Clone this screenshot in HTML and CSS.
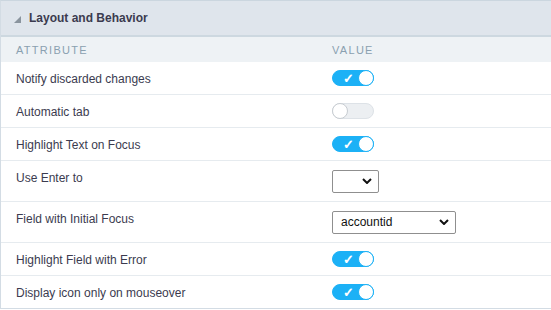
FILE: index.html
```html
<!DOCTYPE html>
<html lang="en">
<head>
  <meta charset="UTF-8">
  <meta name="viewport" content="width=device-width, initial-scale=1.0">
  <title>Layout and Behavior</title>
  <link rel="stylesheet" href="styles.css">
</head>
<body>
  <div class="panel">
    <div class="panel-title">
      <span class="caret"></span>
      <span>Layout and Behavior</span>
    </div>
    <div class="row head">
      <div class="attr">Attribute</div>
      <div class="val">Value</div>
    </div>

    <div class="row">
      <div class="attr">Notify discarded changes</div>
      <div class="val"><span class="toggle on"><span class="check">&#10003;</span><span class="knob"></span></span></div>
    </div>
    <div class="row">
      <div class="attr">Automatic tab</div>
      <div class="val"><span class="toggle"><span class="knob"></span></span></div>
    </div>
    <div class="row">
      <div class="attr">Highlight Text on Focus</div>
      <div class="val"><span class="toggle on"><span class="check">&#10003;</span><span class="knob"></span></span></div>
    </div>
    <div class="row tall">
      <div class="attr">Use Enter to</div>
      <div class="val">
        <div class="select small"><span class="sel-text"></span><svg class="chev" viewBox="0 0 10 6" width="10" height="6"><path d="M1 1l4 4 4-4" fill="none" stroke="#111" stroke-width="2"/></svg></div>
      </div>
    </div>
    <div class="row tall">
      <div class="attr">Field with Initial Focus</div>
      <div class="val">
        <div class="select wide"><span class="sel-text">accountid</span><svg class="chev" viewBox="0 0 10 6" width="10" height="6"><path d="M1 1l4 4 4-4" fill="none" stroke="#111" stroke-width="2"/></svg></div>
      </div>
    </div>
    <div class="row">
      <div class="attr">Highlight Field with Error</div>
      <div class="val"><span class="toggle on"><span class="check">&#10003;</span><span class="knob"></span></span></div>
    </div>
    <div class="row">
      <div class="attr">Display icon only on mouseover</div>
      <div class="val"><span class="toggle on"><span class="check">&#10003;</span><span class="knob"></span></span></div>
    </div>
  </div>
</body>
</html>
```

FILE: styles.css
```css
body {
  margin: 0;
  font-family: Arial, "Liberation Sans", sans-serif;
  background: #fff;
  color: #3b3b4f;
}

.panel {
  width: 551px;
  border-left: 1px solid #d3dce4;
  border-top: 1px solid #cbd6df;
  box-sizing: border-box;
}

.panel-title {
  height: 34px;
  display: flex;
  align-items: center;
  gap: 8px;
  padding-left: 13px;
  background: #dfe5ec;
  border-bottom: 2px solid #cdd8e0;
  font-size: 12px;
  font-weight: bold;
  color: #3b3b4f;
}

.caret {
  width: 0;
  height: 0;
  border-left: 7px solid transparent;
  border-bottom: 7px solid #8a949e;
  margin-top: 2px;
}

.row {
  display: flex;
  align-items: center;
  height: 32px;
  border-bottom: 1px solid #e6ebef;
  font-size: 12px;
}

.row:last-child {
  border-bottom-color: #d3dce4;
}

.row.tall {
  height: 40px;
}

.row .attr {
  align-self: flex-start;
  padding-top: 10px;
}

.row.head {
  height: 25px;
  background: #eef2f5;
  border-bottom: none;
  color: #8aa0b0;
  font-size: 11px;
  text-transform: uppercase;
  letter-spacing: 1.3px;
}

.row.head .attr {
  align-self: center;
  padding-top: 0;
}

.attr {
  width: 316px;
  padding-left: 15px;
}

.val {
  display: flex;
  align-items: center;
}

.toggle {
  position: relative;
  width: 42px;
  height: 16px;
  border-radius: 9px;
  background: #eceff2;
  border: 1px solid #dde2e7;
  box-sizing: border-box;
}

.toggle .knob {
  position: absolute;
  top: -1px;
  left: -1px;
  width: 16px;
  height: 16px;
  border-radius: 50%;
  background: #fff;
  border: 1px solid #c7ccd1;
  box-sizing: border-box;
}

.toggle.on {
  background: #1cb1f6;
  border-color: #1cb1f6;
}

.toggle.on .knob {
  left: auto;
  right: -1px;
  border-color: #1cb1f6;
}

.toggle .check {
  position: absolute;
  left: 10px;
  top: 0;
  font-size: 13px;
  line-height: 15px;
  color: #fff;
  font-weight: bold;
}

.select {
  height: 23px;
  border: 1px solid #8f8f8f;
  border-radius: 2px;
  box-sizing: border-box;
  display: flex;
  align-items: center;
  justify-content: space-between;
  padding: 0 6px 0 8px;
  font-size: 12px;
  color: #111;
}

.select.small {
  width: 47px;
}

.select.wide {
  width: 124px;
}

.chev {
  display: block;
}
```
